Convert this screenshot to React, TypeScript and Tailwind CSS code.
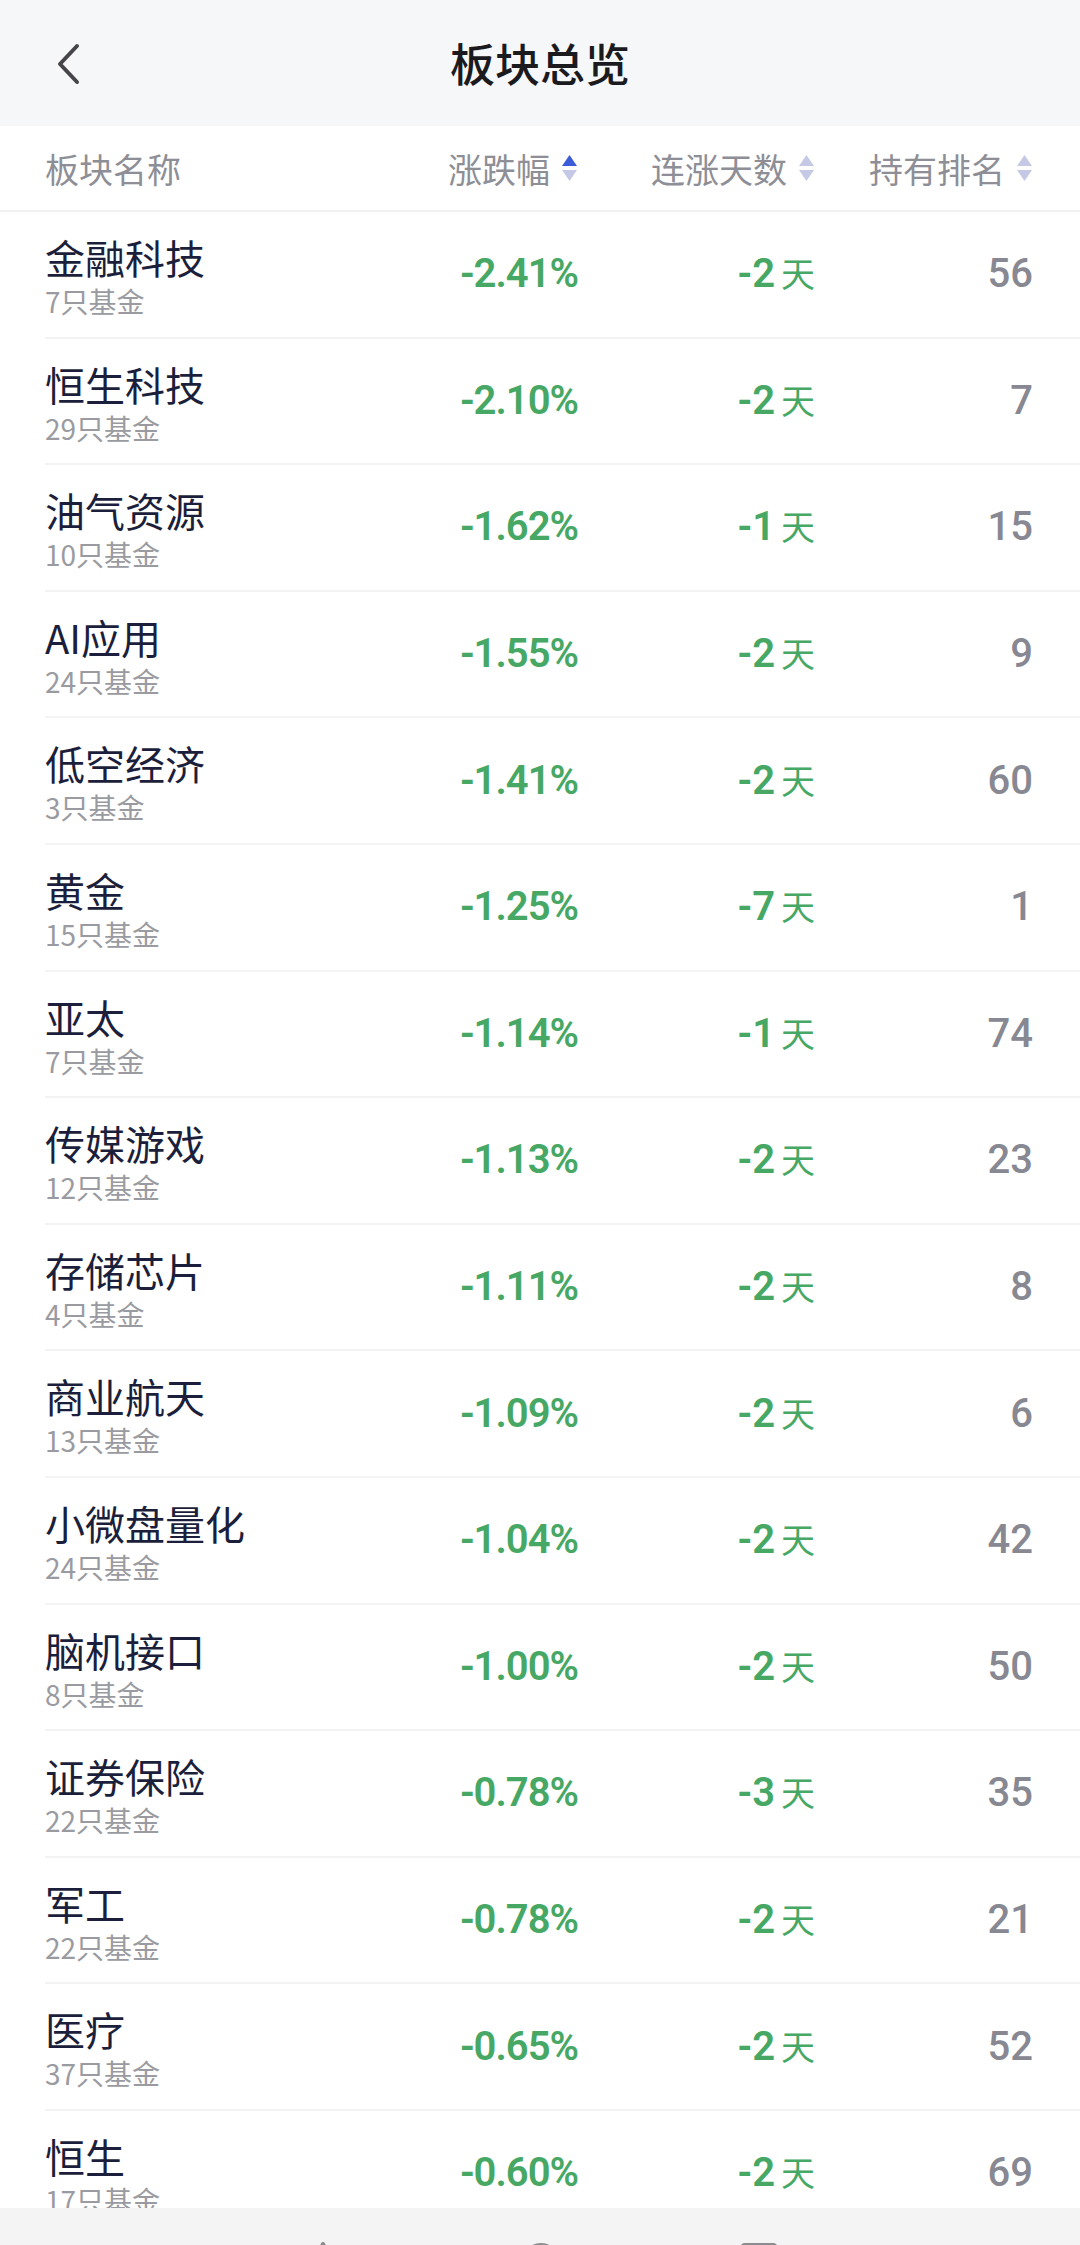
import React from "react";

const rows = [
  { name: "金融科技", count: 7, pct: "-2.41%", days: "-2", rank: 56 },
  { name: "恒生科技", count: 29, pct: "-2.10%", days: "-2", rank: 7 },
  { name: "油气资源", count: 10, pct: "-1.62%", days: "-1", rank: 15 },
  { name: "AI应用", count: 24, pct: "-1.55%", days: "-2", rank: 9 },
  { name: "低空经济", count: 3, pct: "-1.41%", days: "-2", rank: 60 },
  { name: "黄金", count: 15, pct: "-1.25%", days: "-7", rank: 1 },
  { name: "亚太", count: 7, pct: "-1.14%", days: "-1", rank: 74 },
  { name: "传媒游戏", count: 12, pct: "-1.13%", days: "-2", rank: 23 },
  { name: "存储芯片", count: 4, pct: "-1.11%", days: "-2", rank: 8 },
  { name: "商业航天", count: 13, pct: "-1.09%", days: "-2", rank: 6 },
  { name: "小微盘量化", count: 24, pct: "-1.04%", days: "-2", rank: 42 },
  { name: "脑机接口", count: 8, pct: "-1.00%", days: "-2", rank: 50 },
  { name: "证券保险", count: 22, pct: "-0.78%", days: "-3", rank: 35 },
  { name: "军工", count: 22, pct: "-0.78%", days: "-2", rank: 21 },
  { name: "医疗", count: 37, pct: "-0.65%", days: "-2", rank: 52 },
  { name: "恒生", count: 17, pct: "-0.60%", days: "-2", rank: 69 },
];

// up/down sort arrows next to column titles
const SortIcon = ({ active }: { active?: boolean }) => (
  <svg width="17" height="32" viewBox="0 0 17 32" className="ml-[11px]">
    <path d="M8.5 3 L16 14 L1 14 Z" fill={active ? "#3b5bd8" : "#c6c9e6"} />
    <path d="M1 18 L16 18 L8.5 29 Z" fill="#c6c9e6" />
  </svg>
);

const App = () => {
  return (
    <div className="w-[1080px] h-[2245px] overflow-hidden bg-white flex flex-col font-['Roboto','Noto_Sans_CJK_SC',sans-serif]">
      <header className="relative h-[126px] shrink-0 bg-[#f6f7f9] flex items-center justify-center">
        <svg
          width="30"
          height="44"
          viewBox="0 0 30 44"
          className="absolute left-[52px] top-[42px]"
        >
          <path
            d="M25 4 L8 22 L25 40"
            fill="none"
            stroke="#45454a"
            strokeWidth="4"
            strokeLinecap="round"
            strokeLinejoin="round"
          />
        </svg>
        <h1 className="text-[45px] font-medium text-[#1b1b1f] font-['Noto_Sans_CJK_SC',sans-serif]">
          板块总览
        </h1>
      </header>

      <div className="h-[86px] shrink-0 flex items-center pl-[45px] pr-[47px] border-b-2 border-[#f1f1f3] text-[34px] text-[#8d8e96] font-['Noto_Sans_CJK_SC',sans-serif]">
        <div className="flex-1">板块名称</div>
        <div className="w-[240px] flex items-center justify-end">
          涨跌幅
          <SortIcon active />
        </div>
        <div className="w-[237px] flex items-center justify-end">
          连涨天数
          <SortIcon />
        </div>
        <div className="w-[218px] flex items-center justify-end">
          持有排名
          <SortIcon />
        </div>
      </div>

      <div className="flex-1 overflow-hidden">
        {rows.map((r) => (
          <div key={r.name} className="ml-[45px] h-[126.6px] flex items-center pr-[47px] border-b-2 border-[#f3f3f5]">
            <div className="flex-1 self-start pt-[22px] flex flex-col">
              <span className="text-[40px] leading-[46px] text-[#1c1f3b] font-['Noto_Sans_CJK_SC',sans-serif]">
                {r.name}
              </span>
              <span className="text-[28px] leading-[42px] text-[#9a9ba1] font-['Noto_Sans_CJK_SC',sans-serif]">
                {r.count}只基金
              </span>
            </div>
            <div className="w-[240px] text-right text-[40px] font-semibold tracking-[-1px] text-[#46a864]">
              {r.pct}
            </div>
            <div className="w-[237px] flex items-baseline justify-end text-[#46a864]">
              <span className="text-[40px] font-semibold">{r.days}</span>
              <span className="ml-[6px] text-[34px] font-['Noto_Sans_CJK_SC',sans-serif]">天</span>
            </div>
            <div className="w-[218px] text-right text-[40px] font-medium text-[#878892]">
              {r.rank}
            </div>
          </div>
        ))}
      </div>

      <nav className="h-[37px] shrink-0 bg-[#f4f4f5] overflow-hidden flex items-start pt-[34px] pl-[303px] gap-[178px]">
        <svg width="40" height="40" viewBox="0 0 40 40">
          <path d="M20 2 L4 34 L36 34 Z" fill="none" stroke="#8a8a8f" strokeWidth="4" strokeLinejoin="round" />
        </svg>
        <svg width="40" height="40" viewBox="0 0 40 40">
          <circle cx="20" cy="20" r="17" fill="none" stroke="#8a8a8f" strokeWidth="4" />
        </svg>
        <svg width="40" height="40" viewBox="0 0 40 40">
          <rect x="3" y="3" width="34" height="34" rx="3" fill="none" stroke="#8a8a8f" strokeWidth="4" />
        </svg>
      </nav>
    </div>
  );
};

export default App;
